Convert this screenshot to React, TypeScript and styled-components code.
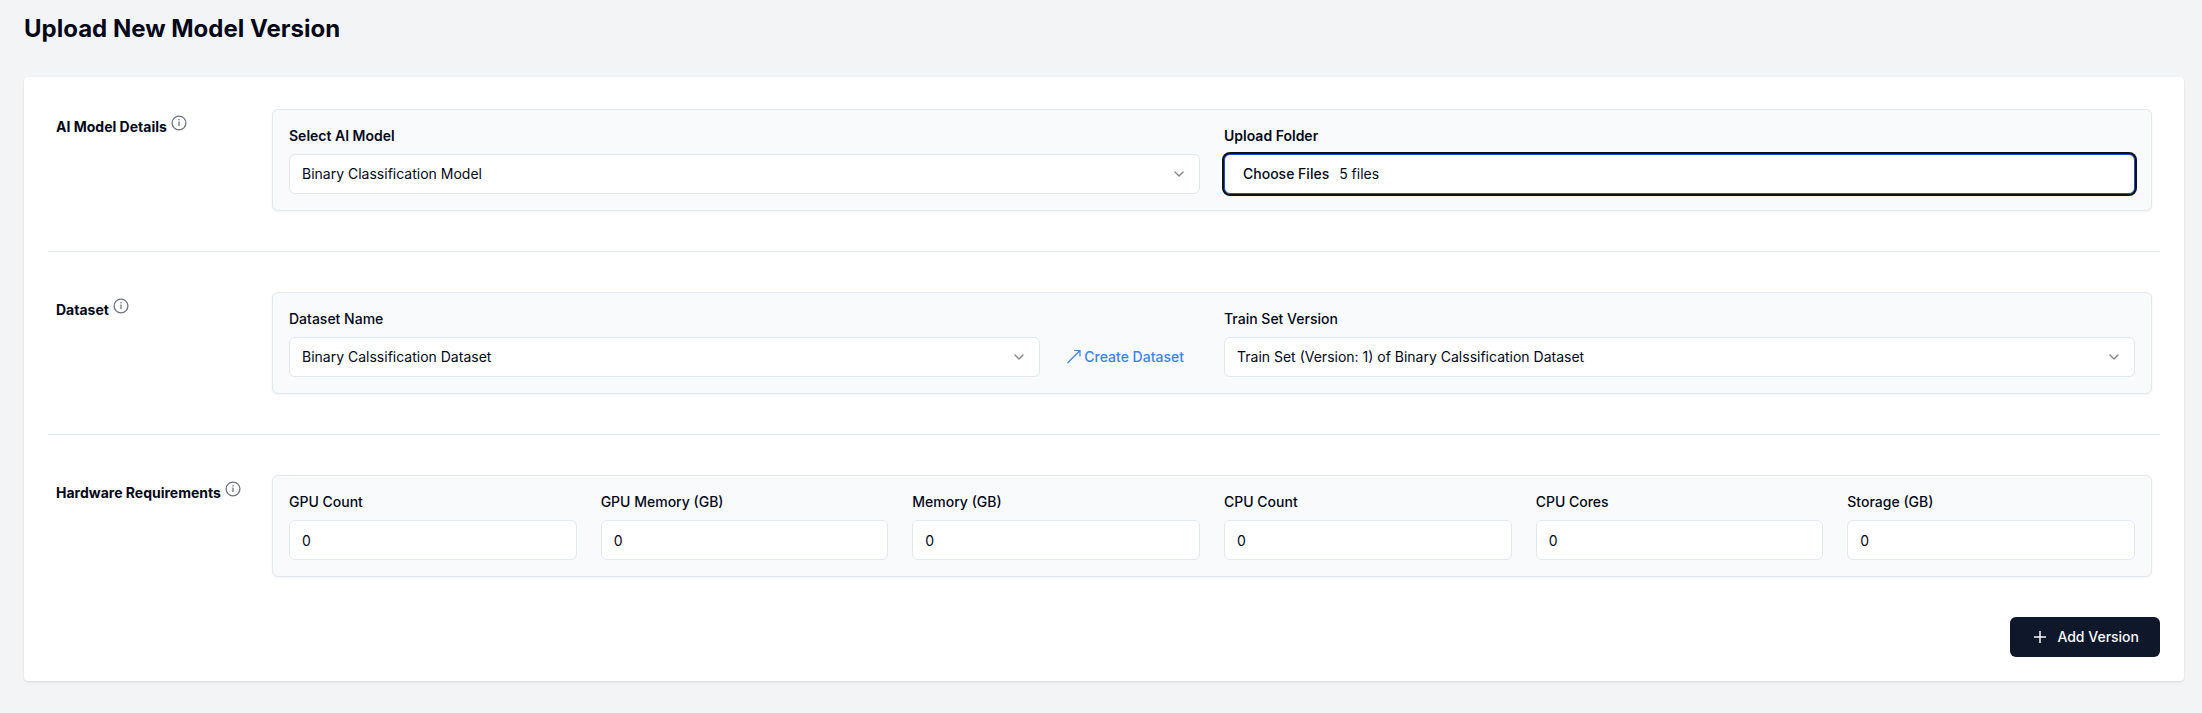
import React, { useEffect, useRef } from "react";
import styled, { createGlobalStyle, css } from "styled-components";

const GlobalStyle = createGlobalStyle`
  *, *::before, *::after { box-sizing: border-box; }
  body {
    margin: 0;
    background: #f3f4f6;
    color: #020817;
    font-family: Inter, "Liberation Sans", sans-serif;
    font-size: 14px;
    line-height: 20px;
  }
`;

const Page = styled.main`
  padding: 13px 18px 32px 24px;
`;

const Title = styled.h1`
  margin: 0 0 32px;
  font-size: 24px;
  line-height: 32px;
  font-weight: 700;
`;

const Card = styled.form`
  display: flex;
  flex-direction: column;
  gap: 32px;
  padding: 24px;
  border-radius: 4px;
  background: #fff;
  box-shadow: 0 1px 3px rgba(0, 0, 0, 0.1), 0 1px 2px -1px rgba(0, 0, 0, 0.1);
`;

const Section = styled.section`
  display: grid;
  grid-template-columns: 208px minmax(0, 1fr);
  gap: 8px;
  padding: 8px;
`;

const SectionTitle = styled.h2`
  display: flex;
  align-items: flex-start;
  gap: 4px;
  margin: 0;
  padding-top: 6px;
  font-size: 14px;
  line-height: 24px;
  font-weight: 700;
  white-space: nowrap;
`;

const InfoIcon = styled.svg`
  width: 16px;
  height: 16px;
  color: #6b7280;
`;

const Panel = styled.div<{ $columns: number }>`
  display: grid;
  grid-template-columns: repeat(${(p) => p.$columns}, minmax(0, 1fr));
  gap: 24px;
  padding: 16px;
  border: 1px solid #e2e8f0;
  border-radius: 6px;
  background: #f9fafc;
  box-shadow: 0 1px 2px rgba(0, 0, 0, 0.05);
`;

const Field = styled.div`
  display: flex;
  flex-direction: column;
  gap: 8px;
`;

const Label = styled.label<{ $strong?: boolean }>`
  font-weight: ${(p) => (p.$strong ? 600 : 500)};
`;

const control = css`
  display: block;
  width: 100%;
  height: 40px;
  margin: 0;
  border: 1px solid #e2e8f0;
  border-radius: 6px;
  background: #fff;
  color: #020817;
  font: inherit;
  outline: none;
`;

const ControlRow = styled.div`
  display: flex;
  gap: 8px;
`;

const SelectBox = styled.div`
  position: relative;
  flex: 1;
`;

const Select = styled.select`
  ${control}
  appearance: none;
  padding: 0 40px 0 12px;
`;

const Chevron = styled.svg`
  position: absolute;
  top: 12px;
  right: 13px;
  width: 16px;
  height: 16px;
  color: #020817;
  opacity: 0.5;
  pointer-events: none;
`;

const NumberInput = styled.input`
  ${control}
  padding: 8px 12px;
  appearance: textfield;
  &::-webkit-inner-spin-button { appearance: none; }
`;

const FileInput = styled.input`
  ${control}
  padding: 8px 12px;
  border-color: #1d4ed8;
  box-shadow: 0 0 0 2px #101113;
  &::file-selector-button {
    border: 0;
    background: transparent;
    color: #020817;
    font: inherit;
    font-weight: 500;
  }
`;

const CreateLink = styled.a`
  display: flex;
  align-items: center;
  gap: 2px;
  height: 40px;
  padding: 0 16px;
  color: #3b82f6;
  font-weight: 500;
  text-decoration: none;
  white-space: nowrap;
`;

const Divider = styled.hr`
  width: 100%;
  height: 1px;
  margin: 0;
  border: 0;
  background: #e2e8f0;
`;

const SubmitButton = styled.button`
  display: flex;
  align-items: center;
  align-self: flex-end;
  gap: 8px;
  height: 40px;
  padding: 0 21px;
  border: 0;
  border-radius: 6px;
  background: #0f172a;
  color: #f8fafc;
  font: inherit;
  font-weight: 500;
`;

const Icon = styled.svg`
  width: 18px;
  height: 18px;
`;

function Info() {
  return (
    <InfoIcon viewBox="0 0 16 16" role="img" aria-label="More information">
      <circle cx="8" cy="8" r="6.9" fill="none" stroke="currentColor" strokeWidth="1.3" />
      <path d="M8 6.6v4.4" fill="none" stroke="currentColor" strokeWidth="1.3" />
      <circle cx="8" cy="4.8" r="0.8" fill="currentColor" />
    </InfoIcon>
  );
}

function SelectField({ id, value }: { id: string; value: string }) {
  return (
    <SelectBox>
      <Select id={id} defaultValue={value}>
        <option value={value}>{value}</option>
      </Select>
      <Chevron viewBox="0 0 16 16" aria-hidden="true">
        <path
          d="M4 6 8 10 12 6"
          fill="none"
          stroke="currentColor"
          strokeWidth="1.3"
          strokeLinecap="round"
          strokeLinejoin="round"
        />
      </Chevron>
    </SelectBox>
  );
}

function FolderInput({ id }: { id: string }) {
  const ref = useRef<HTMLInputElement>(null);
  useEffect(() => {
    const folder = new DataTransfer();
    ["config.json", "labels.json", "model.py", "requirements.txt", "weights.bin"].forEach((name) =>
      folder.items.add(new File([""], name))
    );
    if (ref.current) ref.current.files = folder.files;
  }, []);
  return <FileInput id={id} ref={ref} type="file" multiple />;
}

const hardware = [
  { id: "gpu-count", label: "GPU Count" },
  { id: "gpu-memory", label: "GPU Memory (GB)" },
  { id: "memory", label: "Memory (GB)" },
  { id: "cpu-count", label: "CPU Count" },
  { id: "cpu-cores", label: "CPU Cores" },
  { id: "storage", label: "Storage (GB)" },
];

export default function App() {
  return (
    <>
      <GlobalStyle />
      <Page>
        <Title>Upload New Model Version</Title>
        <Card onSubmit={(e) => e.preventDefault()}>
          <Section>
            <SectionTitle>AI Model Details <Info /></SectionTitle>
            <Panel $columns={2}>
              <Field>
                <Label htmlFor="model" $strong>Select AI Model</Label>
                <SelectField id="model" value="Binary Classification Model" />
              </Field>
              <Field>
                <Label htmlFor="folder" $strong>Upload Folder</Label>
                <FolderInput id="folder" />
              </Field>
            </Panel>
          </Section>
          <Divider />
          <Section>
            <SectionTitle>Dataset <Info /></SectionTitle>
            <Panel $columns={2}>
              <Field>
                <Label htmlFor="dataset">Dataset Name</Label>
                <ControlRow>
                  <SelectField id="dataset" value="Binary Calssification Dataset" />
                  <CreateLink href="#create-dataset">
                    <Icon viewBox="0 0 18 18" aria-hidden="true">
                      <path
                        d="M3.5 15 16 2.5M10 2.5h6v6"
                        fill="none"
                        stroke="currentColor"
                        strokeWidth="1.2"
                      />
                    </Icon>
                    Create Dataset
                  </CreateLink>
                </ControlRow>
              </Field>
              <Field>
                <Label htmlFor="train-set">Train Set Version</Label>
                <SelectField
                  id="train-set"
                  value="Train Set (Version: 1) of Binary Calssification Dataset"
                />
              </Field>
            </Panel>
          </Section>
          <Divider />
          <Section>
            <SectionTitle>Hardware Requirements <Info /></SectionTitle>
            <Panel $columns={6}>
              {hardware.map(({ id, label }) => (
                <Field key={id}>
                  <Label htmlFor={id}>{label}</Label>
                  <NumberInput id={id} type="number" defaultValue={0} />
                </Field>
              ))}
            </Panel>
          </Section>
          <SubmitButton type="submit">
            <Icon viewBox="0 0 18 18" aria-hidden="true">
              <path d="M9 3v12M3 9h12" fill="none" stroke="currentColor" strokeWidth="1.5" />
            </Icon>
            Add Version
          </SubmitButton>
        </Card>
      </Page>
    </>
  );
}
